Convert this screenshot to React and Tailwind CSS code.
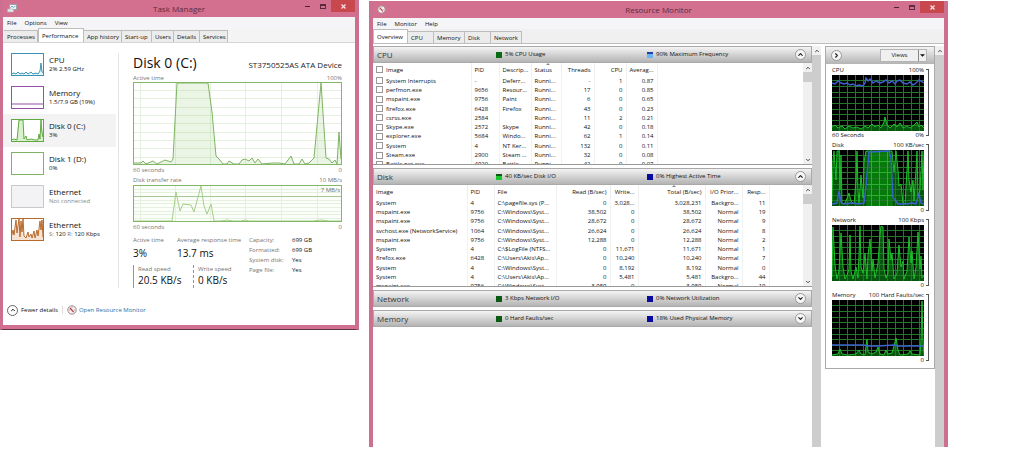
import React from 'react';
import clsx from 'clsx';
import { ChevronUp, ChevronDown, ChevronRight } from 'lucide-react';

// ---------------------------------------------------------------------------
// Data
// ---------------------------------------------------------------------------
const DEVICES = [
  { id: 'cpu', name: 'CPU', info: '2% 2.59 GHz', stroke: '#3a93b5', fill: '#e8f4f9', line: '0,21 3,20 5,21 7,19 9,21 11,20 13,21 15,19 17,21 20,19 22,21 25,20 27,21 29,18 30,10 31,19 33,20' },
  { id: 'mem', name: 'Memory', info: '1.5/7.9 GB (19%)', stroke: '#9450a8', fill: 'none', line: '0,18 33,18' },
  { id: 'd0', name: 'Disk 0 (C:)', info: '3%', stroke: '#62a844', fill: '#d9f2cd', line: '0,21 3,20 6,21 8,1 12,1 13,20 15,17 16,21 20,20 24,21 27,21 28,15 29,20 30,1 31,14 32,18 33,1', active: true },
  { id: 'd1', name: 'Disk 1 (D:)', info: '0%', stroke: '#7fb562', fill: 'none', line: '' },
  { id: 'e0', name: 'Ethernet', info: 'Not connected', stroke: '#c9c9cd', fill: 'none', line: '', off: true },
  { id: 'e1', name: 'Ethernet', info: '', stroke: '#b86a2c', fill: '#f6e3d3', line: '0,20 2,12 3,17 5,2 6,15 8,1 9,19 10,3 11,14 12,1 13,18 15,20 17,14 18,19 20,16 21,20 23,13 24,20 26,12 27,18 29,3 30,12 31,2 32,19 33,16' },
];

const CPU_ROWS = [
  ['System Interrupts', '-', 'Deferr...', '-', '1', '0.87'],
  ['perfmon.exe', '9656', 'Resour...', '17', '0', '0.85'],
  ['mspaint.exe', '9756', 'Paint', '6', '0', '0.65'],
  ['firefox.exe', '6428', 'Firefox', '43', '0', '0.23'],
  ['csrss.exe', '2584', '', '11', '2', '0.21'],
  ['Skype.exe', '2572', 'Skype', '42', '0', '0.18'],
  ['explorer.exe', '5684', 'Windo...', '62', '1', '0.14'],
  ['System', '4', 'NT Ker...', '132', '0', '0.11'],
  ['Steam.exe', '2900', 'Steam ...', '32', '0', '0.08'],
  ['Battle.net.exe', '4920', 'Battle...', '42', '0', '0.07'],
];

const DISK_ROWS = [
  ['System', '4', 'C:\\pagefile.sys (P...', '0', '3,028...', '3,028,231', 'Backgro...', '11'],
  ['mspaint.exe', '9756', 'C:\\Windows\\Syst...', '38,502', '0', '38,502', 'Normal', '19'],
  ['mspaint.exe', '9756', 'C:\\Windows\\Syst...', '28,672', '0', '28,672', 'Normal', '9'],
  ['svchost.exe (NetworkService)', '1064', 'C:\\Windows\\Syst...', '26,624', '0', '26,624', 'Normal', '8'],
  ['mspaint.exe', '9756', 'C:\\Windows\\Syst...', '12,288', '0', '12,288', 'Normal', '2'],
  ['System', '4', 'C:\\$LogFile (NTFS...', '0', '11,671', '11,671', 'Normal', '1'],
  ['firefox.exe', '6428', 'C:\\Users\\Akis\\Ap...', '0', '10,240', '10,240', 'Normal', '7'],
  ['System', '4', 'C:\\Windows\\Syst...', '0', '8,192', '8,192', 'Normal', '0'],
  ['System', '4', 'C:\\Users\\Akis\\Ap...', '0', '5,481', '5,481', 'Backgro...', '44'],
  ['mspaint.exe', '9756', 'C:\\Windows\\Syst...', '3,959', '0', '3,959', 'Normal', '19'],
];

const GRAPHS = [
  {
    name: 'CPU', max: '100%', left: '60 Seconds', min: '0%',
    green: '0,52 3,50 6,53 10,51 13,54 17,51 21,53 25,52 29,54 33,51 36,53 40,49 43,52 46,50 49,53 52,47 53,42 55,50 58,53 62,49 65,52 68,48 71,53 75,51 78,53 82,50 85,47 87,52 89,50 92,53',
    blue: '0,8 3,9 6,6 9,8 12,9 15,8 18,10 21,9 24,11 27,10 31,11 33,8 34,3 36,6 38,4 41,8 44,6 48,8 51,7 54,5 57,8 60,6 63,9 65,6 68,5 71,8 75,9 78,7 81,10 84,8 87,5 92,8',
  },
  {
    name: 'Disk', max: '100 KB/sec', left: '', min: '0',
    green: '0,52 1,10 2,1 4,30 5,1 7,1 8,40 9,5 10,54 13,53 16,46 17,43 19,51 22,54 24,30 25,1 26,40 27,53 29,25 31,48 32,12 34,1 60,1 62,22 64,1 66,20 67,36 69,34 71,53 73,54 75,20 76,1 77,30 79,42 81,30 82,51 84,20 85,1 86,46 88,40 90,1 91,40 92,1',
    blue: '0,54 5,53 7,41 9,52 12,54 20,53 27,54 32,53 34,36 37,2 57,1 59,8 61,48 63,50 66,54 74,54 80,53 84,54 87,44 89,53 92,54',
    block: '34,56 38,1 58,1 61,56',
  },
  {
    name: 'Network', max: '100 Kbps', left: '', min: '0',
    green: '0,52 1,2 3,40 5,54 7,45 9,8 11,42 13,54 15,50 17,44 18,10 19,46 21,54 24,42 26,53 27,30 28,1 29,42 31,48 33,28 35,54 36,30 38,14 40,46 41,34 43,53 46,38 48,10 49,1 51,2 52,44 54,53 56,48 57,14 59,35 60,28 62,54 65,48 67,20 69,42 71,36 72,54 75,46 77,12 79,38 80,26 82,54 84,42 86,7 88,44 89,31 90,53 92,50',
    blue: '',
  },
  {
    name: 'Memory', max: '100 Hard Faults/sec', left: '', min: '0',
    green: '0,55 6,54 8,49 10,54 16,55 24,54 27,50 29,54 33,55 34,46 35,39 36,52 40,54 44,52 46,47 48,54 52,55 54,50 56,54 60,53 62,46 64,38 66,50 68,55 76,54 78,51 80,54 88,55 89,40 90,1 91,40 92,55',
    blue: '0,45 32,45 36,46 46,46 62,45 66,46 92,46',
  },
];

// ---------------------------------------------------------------------------
// Small parts
// ---------------------------------------------------------------------------
function TitleBar({ title, icon }) {
  return (
    <header className="flex h-[17px] items-start">
      <div className="w-[58px] pt-1 pl-1">{icon}</div>
      <h1 className="flex-1 pt-[3px] text-center text-[8px] leading-[11px] text-[#5c2b3d]">{title}</h1>
      <div className="flex w-[58px] items-start justify-end">
        <button aria-label="Minimize" className="flex h-3 w-4 items-center justify-center">
          <span className="h-px w-[5px] bg-[#4a2230]" />
        </button>
        <button aria-label="Maximize" className="flex h-3 w-4 items-center justify-center">
          <span className="h-[5px] w-[6px] border border-t-2 border-[#5c2b3d]" />
        </button>
        <button aria-label="Close" className="flex h-3 w-6 items-center justify-center bg-[#c9484e]">
          <svg viewBox="0 0 5 5" className="size-[5px]" stroke="#f7e3e4" strokeWidth="1.2">
            <path d="M.5.5l4 4M4.5.5l-4 4" />
          </svg>
        </button>
      </div>
    </header>
  );
}

function MenuBar({ items }) {
  return (
    <nav className="flex h-[11px] items-center gap-2 bg-[#f5f5f8] pl-1">
      {items.map(item => (
        <button key={item} className="text-[6px] leading-[8px] text-[#111]">{item}</button>
      ))}
    </nav>
  );
}

function Tab({ label, width, selected }) {
  return (
    <button
      role="tab"
      aria-selected={!!selected}
      className={clsx(
        'border-r border-[#bdbdbd] pl-[3px] text-left text-[6px] leading-[10px] whitespace-nowrap text-[#111]',
        width,
        selected ? 'h-[14px] border-t border-l bg-white' : 'h-3 border-t bg-[#ececec]',
      )}
    >
      {label}
    </button>
  );
}

function GaugeIcon({ className }) {
  return (
    <svg viewBox="0 0 10 10" className={className} fill="none">
      <circle cx="5" cy="5" r="4.2" fill="#f4eeee" stroke="#a08a8e" />
      <path d="M3 3l3.6 4" stroke="#b3404a" strokeWidth="1.2" />
      <path d="M5 1.8v1M8 5h-1M2 5h1" stroke="#777" strokeWidth=".6" />
    </svg>
  );
}

function RoundButton({ icon: Glyph, label }) {
  return (
    <button aria-label={label} className="flex size-[11px] shrink-0 items-center justify-center rounded-full border border-[#999] bg-[#f6f6f6]">
      <Glyph size={7} strokeWidth={4} color="#222" />
    </button>
  );
}

function Scrollbar({ thumb, both }) {
  return (
    <div className="flex w-[9px] shrink-0 flex-col items-center bg-[#f0f0f0]">
      <button aria-label="Scroll up" className="flex h-[9px] w-full items-center justify-center">
        <ChevronUp size={6} strokeWidth={4} color="#444" />
      </button>
      <div className={clsx('w-full bg-[#cdcdcd]', thumb)} />
      {both && (
        <button aria-label="Scroll down" className="mt-auto flex h-[9px] w-full items-center justify-center">
          <ChevronDown size={6} strokeWidth={4} color="#444" />
        </button>
      )}
    </div>
  );
}

// ---------------------------------------------------------------------------
// Task Manager
// ---------------------------------------------------------------------------
function DeviceItem({ device }) {
  const { name, info, stroke, fill, line, active, off, id } = device;
  return (
    <button className={clsx('flex h-[33px] w-full items-center gap-[5px] pl-2 text-left', active && 'bg-[#f3f3f3]')}>
      <svg viewBox="0 0 33 23" preserveAspectRatio="none" className="h-[23px] w-[33px] shrink-0">
        <rect x=".5" y=".5" width="32" height="22" fill={off ? '#f3f3f5' : '#fff'} />
        {line && <polygon points={`0,22 ${line} 33,22`} fill={fill} />}
        {line && <polyline points={line} fill="none" stroke={stroke} />}
        <rect x=".5" y=".5" width="32" height="22" fill="none" stroke={stroke} />
      </svg>
      <span className="flex flex-col whitespace-nowrap">
        <span className="text-[8px] leading-[10px] text-[#111]">{name}</span>
        <span className={clsx('text-[6px] leading-[9px]', off ? 'text-[#888]' : 'text-[#111]')}>
          {id === 'e1' ? (
            <><span className="text-[#777]">S:</span> 120 <span className="text-[#777]">R:</span> 120 Kbps</>
          ) : info}
        </span>
      </span>
    </button>
  );
}

function GridLines({ xs, ys, w, h, color }) {
  return (
    <g stroke={color} strokeWidth="1">
      {xs.map(x => <path key={`x${x}`} d={`M${x}.5 0V${h}`} />)}
      {ys.map(y => <path key={`y${y}`} d={`M0 ${y}.5H${w}`} />)}
    </g>
  );
}

function ChartLabels({ left, right, className }) {
  return (
    <div className={clsx('flex items-center justify-between text-[6px] text-[#757575]', className)}>
      <span>{left}</span>
      <span>{right}</span>
    </div>
  );
}

function DiskPage() {
  const active = '0,81 8,81 10,79 13,82 20,79 24,82 32,78 38,80 40,77 44,1 75,1 79,30 83,74 86,77 90,82 94,82 96,79 101,82 106,82 109,78 112,77 116,79 119,76 122,81 125,77 129,82 140,81 146,81 152,82 158,74 161,82 166,82 169,77 172,82 176,81 181,76 188,1 193,76 196,77 199,81 202,78 204,82 206,50 208,77';
  const transfer = '0,36 39,36 43,7 47,26 50,19 58,20 61,27 68,1 71,21 74,29 78,19 81,36 88,36 94,35 100,36 108,36 112,35 116,36 180,36 188,35 196,36 208,36';
  return (
    <section className="flex-1 pt-[9px] pr-[13px] pl-[14px]">
      <div className="flex h-[22px] items-center justify-between">
        <h2 className="text-[14px] leading-5 text-[#111]">Disk 0 (C:)</h2>
        <span className="pt-1 text-[8px] leading-3 text-[#222]">ST3750525AS ATA Device</span>
      </div>
      <ChartLabels className="h-2" left="Active time" right="100%" />
      <svg viewBox="0 0 209 83" preserveAspectRatio="none" className="block h-[83px] w-full bg-white">
        <GridLines xs={[7, 42, 77, 112, 148, 184]} ys={[8, 16, 25, 33, 41, 50, 58, 66, 75]} w={209} h={83} color="#e6f0df" />
        <polygon points={`0,83 ${active} 209,83`} fill="#7cc35b" fillOpacity=".16" />
        <polyline points={active} fill="none" stroke="#7fb562" />
        <rect x=".5" y=".5" width="208" height="82" fill="none" stroke="#83b667" />
      </svg>
      <ChartLabels className="h-[11px]" left="60 seconds" right="0" />
      <ChartLabels className="h-[9px]" left="Disk transfer rate" right="10 MB/s" />
      <div className="relative">
        <svg viewBox="0 0 209 37" preserveAspectRatio="none" className="block h-[37px] w-full bg-[#fbfef9]">
          <GridLines xs={[7, 42, 77, 112, 148, 184]} ys={[4, 7, 15, 18, 22, 26, 29, 33]} w={209} h={37} color="#e6f0df" />
          <path d="M0 11.5H209" stroke="#a5c795" />
          <polyline points={transfer} fill="none" stroke="#a3d087" />
          <rect x=".5" y=".5" width="208" height="36" fill="none" stroke="#83b667" />
        </svg>
        <span className="absolute top-px right-[2px] text-[6px] leading-[9px] text-[#757575]">7 MB/s</span>
      </div>
      <ChartLabels className="h-[11px]" left="60 seconds" right="0" />

      {/* Counters */}
      <div className="flex pt-[3px] text-[6px] leading-[9px] whitespace-nowrap text-[#757575]">
        <div className="w-[116px]">
          <div className="flex">
            <div className="w-11">
              <div>Active time</div>
              <div className="text-[10px] leading-4 text-[#111]">3%</div>
            </div>
            <div>
              <div>Average response time</div>
              <div className="text-[10px] leading-4 text-[#111]">13.7 ms</div>
            </div>
          </div>
          <div className="flex pt-1">
            <div className="mr-[10px] w-[50px] border-l border-[#6db74b] pl-1">
              <div className="leading-2">Read speed</div>
              <div className="text-[10px] leading-[15px] text-[#111]">20.5 KB/s</div>
            </div>
            <div className="border-l border-dashed border-[#6db74b] pl-1">
              <div className="leading-2">Write speed</div>
              <div className="text-[10px] leading-[15px] text-[#111]">0 KB/s</div>
            </div>
          </div>
        </div>
        <dl className="grid grid-cols-[43px_auto] content-start gap-y-px">
          <dt>Capacity:</dt><dd className="text-[#111]">699 GB</dd>
          <dt>Formatted:</dt><dd className="text-[#111]">699 GB</dd>
          <dt>System disk:</dt><dd className="text-[#111]">Yes</dd>
          <dt>Page file:</dt><dd className="text-[#111]">Yes</dd>
        </dl>
      </div>
    </section>
  );
}

function TaskManager() {
  return (
    <section className="self-start border-r-4 border-b border-l-3 border-[#cd7090] border-b-[#5b3542] bg-[#d4708f] pb-1">
      <TitleBar
        title="Task Manager"
        icon={
          <svg viewBox="0 0 10 9" className="h-[9px] w-[10px]" fill="none">
            <rect x="2.5" y=".5" width="7" height="5" fill="#eef3f5" stroke="#9aa5ab" />
            <path d="M3.5 4l1.5-2 1.5 1.5L8.5 2" stroke="#5b9bb0" strokeWidth=".8" />
            <rect x=".5" y="5" width="6" height="3" fill="#e3e8ea" stroke="#a9b1b5" strokeWidth=".6" />
          </svg>
        }
      />
      <MenuBar items={['File', 'Options', 'View']} />
      <div role="tablist" className="flex items-end border-b border-[#d5d5d5] bg-[#f4f4f4] pl-px">
        <Tab label="Processes" width="w-[34px]" />
        <Tab label="Performance" width="w-[46px]" selected />
        <Tab label="App history" width="w-[38px]" />
        <Tab label="Start-up" width="w-[30px]" />
        <Tab label="Users" width="w-[22px]" />
        <Tab label="Details" width="w-[26px]" />
        <Tab label="Services" width="w-[28px]" />
      </div>
      <div className="bg-white">
        <div className="flex">
          <div className="w-[113px] pt-[5px]">
            {DEVICES.map(d => <DeviceItem key={d.id} device={d} />)}
          </div>
          <div className="mt-[10px] ml-[2px] w-px bg-[#e4e4e4]" />
          <DiskPage />
        </div>
        <footer className="flex h-[37px] items-center pt-[7px] pl-1 text-[6px]">
          <button className="flex items-center gap-[3px] text-[#111]">
            <span className="flex size-[11px] items-center justify-center rounded-full border border-[#666]">
              <ChevronUp size={6} strokeWidth={4} />
            </span>
            Fewer details
          </button>
          <span className="mx-1 h-2 w-px bg-[#ddd]" />
          <a href="#resmon" className="flex items-center gap-[2px] text-[#2c6fa6]">
            <GaugeIcon className="size-[10px]" />
            Open Resource Monitor
          </a>
        </footer>
      </div>
    </section>
  );
}

// ---------------------------------------------------------------------------
// Resource Monitor
// ---------------------------------------------------------------------------
function Led({ color, label }) {
  return (
    <span className="flex items-center gap-[3px]">
      <span className={clsx('size-[6px] shrink-0', color)} />
      <span className="text-[6px] text-[#111]">{label}</span>
    </span>
  );
}

function SectionBar({ title, usage, usageColor, second, secondColor, open }) {
  return (
    <div className="flex h-[17px] items-center border border-[#a9a9a9] bg-linear-to-b from-[#f4f4f4] to-[#b4b4b4] pr-[5px] pl-[3px] whitespace-nowrap">
      <h2 className="w-[119px] text-[8px] text-[#333]">{title}</h2>
      <div className="w-[151px]"><Led color={usageColor} label={usage} /></div>
      <div className="flex-1"><Led color={secondColor} label={second} /></div>
      <RoundButton icon={open ? ChevronUp : ChevronDown} label={`Toggle ${title}`} />
    </div>
  );
}

function SortMark() {
  return (
    <svg viewBox="0 0 4 2" className="absolute top-0 left-1/2 h-[2px] w-1" fill="#888">
      <path d="M0 2L2 0l2 2z" />
    </svg>
  );
}

// aligns holds one class per column, shared by header and body cells
function DataTable({ widths, heads, aligns, rows, sorted, boxes }) {
  return (
    <div className="flex h-[102px] overflow-hidden border-b border-[#999] bg-white">
      <div className="flex-1">
        <table className="h-[106px] w-full table-fixed border-collapse text-[6px] leading-[8px] whitespace-nowrap text-[#111]">
          <colgroup>
            {widths.map((w, i) => <col key={i} className={w} />)}
            <col />
          </colgroup>
          <thead>
            <tr className="h-[13px]">
              {heads.map((h, i) => (
                <th key={h} className={clsx('relative border-r border-[#eee] px-[3px] py-0 font-normal', aligns[i])}>
                  {boxes && i === 0 ? (
                    <label className="flex items-center gap-[3px]">
                      <input type="checkbox" className="size-[7px] appearance-none border border-[#999] bg-white" />
                      {h}
                    </label>
                  ) : h}
                  {sorted === i && <SortMark />}
                </th>
              ))}
              <th />
            </tr>
          </thead>
          <tbody>
            {rows.map((row, r) => (
              <tr key={r}>
                {row.map((cell, i) => (
                  <td key={i} className={clsx('border-r border-[#f2f2f2] px-[3px] py-0', aligns[i])}>
                    {boxes && i === 0 ? (
                      <label className="flex items-center gap-[3px]">
                        <input type="checkbox" className="size-[7px] appearance-none border border-[#999] bg-white" />
                        {cell}
                      </label>
                    ) : cell}
                  </td>
                ))}
                <td />
              </tr>
            ))}
          </tbody>
        </table>
      </div>
      <Scrollbar thumb="h-[10px]" both />
    </div>
  );
}

function ResourceGraph({ graph }) {
  return (
    <div className="flex">
      <div className="flex-1">
        <div className="flex h-[10px] items-center justify-between text-[6px] whitespace-nowrap text-[#111]">
          <span>{graph.name}</span>
          <span>{graph.max}</span>
        </div>
        <svg viewBox="0 0 92 56" preserveAspectRatio="none" className="block h-14 w-full bg-black">
          <polygon points={`0,56 ${graph.green} 92,56`} fill="#0a7a12" fillOpacity=".7" />
          {graph.block && <polygon points={graph.block} fill="#067a0a" />}
          <GridLines xs={[7, 15, 23, 31, 39, 47, 55, 63, 71, 79, 87]} ys={[5, 11, 17, 22, 28, 34, 39, 45, 50]} w={92} h={56} color="#23762a" />
          {graph.block && (
            <path d="M39.5 2V56M47.5 2V56M55.5 2V56M36 11.5H59M36 22.5H60M35 34.5H60M35 45.5H61" stroke="#2fae36" />
          )}
          <polyline points={graph.green} fill="none" stroke="#1fbf2c" />
          <polyline points={graph.blue} fill="none" stroke="#3c62cf" strokeWidth="1.4" />
        </svg>
        <div className="flex h-[9px] items-center justify-between text-[6px] text-[#111]">
          <span>{graph.left}</span>
          <span>{graph.min}</span>
        </div>
      </div>
      <div className="my-1 ml-[2px] w-[3px] border-y border-r border-[#555]" />
    </div>
  );
}

function ResourceMonitor() {
  return (
    <section className="mt-px flex flex-col border-x-4 border-[#cd7090] bg-[#d4708f]">
      <TitleBar title="Resource Monitor" icon={<GaugeIcon className="size-[9px]" />} />
      <MenuBar items={['File', 'Monitor', 'Help']} />
      <div role="tablist" className="flex items-end border-b border-[#bdbdbd] bg-[#f0f0f0]">
        <Tab label="Overview" width="w-[35px]" selected />
        <Tab label="CPU" width="w-[26px]" />
        <Tab label="Memory" width="w-[31px]" />
        <Tab label="Disk" width="w-[26px]" />
        <Tab label="Network" width="w-[31px]" />
      </div>
      <div className="flex flex-1 bg-white pt-[2px]">
        <main className="flex flex-1 flex-col gap-[3px]">
          <div>
            <SectionBar title="CPU" usage="5% CPU Usage" usageColor="bg-[#0b6b14]" second="90% Maximum Frequency" secondColor="border-t-2 border-[#1c3fb0] bg-[#6cb4f0]" open />
            <DataTable
              boxes
              sorted={3}
              widths={['w-[98px]', 'w-[28px]', 'w-[32px]', 'w-[30px]', 'w-[33px]', 'w-[32px]', 'w-[31px]']}
              heads={['Image', 'PID', 'Descrip...', 'Status', 'Threads', 'CPU', 'Averag...']}
              aligns={['text-left', 'text-left', 'text-left', 'text-left', 'text-right', 'text-right', 'text-right']}
              rows={CPU_ROWS.map(([name, pid, desc, ...rest]) => [name, pid, desc, 'Runni...', ...rest])}
            />
          </div>
          <div>
            <SectionBar title="Disk" usage="40 KB/sec Disk I/O" usageColor="border-t-2 border-[#0b5a14] bg-[#19c52c]" second="0% Highest Active Time" secondColor="bg-[#0a0aa0]" open />
            <DataTable
              sorted={5}
              widths={['w-[94px]', 'w-[27px]', 'w-[62px]', 'w-[54px]', 'w-[28px]', 'w-[67px]', 'w-[37px]', 'w-[27px]']}
              heads={['Image', 'PID', 'File', 'Read (B/sec)', 'Write...', 'Total (B/sec)', 'I/O Prior...', 'Resp...']}
              aligns={['text-left', 'text-left', 'text-left', 'text-right', 'text-right', 'text-right', 'text-right', 'text-right']}
              rows={DISK_ROWS}
            />
          </div>
          <SectionBar title="Network" usage="3 Kbps Network I/O" usageColor="bg-[#0b5a14]" second="0% Network Utilization" secondColor="bg-[#0a0aa0]" />
          <SectionBar title="Memory" usage="0 Hard Faults/sec" usageColor="bg-[#0b5a14]" second="18% Used Physical Memory" secondColor="bg-[#0a0aa0]" />
        </main>
        <Scrollbar thumb="flex-1" />
        <aside className="ml-1 w-[110px]">
          <div className="border border-[#aaa]">
            <div className="flex h-[17px] items-center justify-between bg-linear-to-b from-[#f4f4f4] to-[#b4b4b4] pr-[7px] pl-[5px]">
              <RoundButton icon={ChevronRight} label="Hide graphs" />
              <div className="flex h-[13px] border border-[#b5b5b5] bg-[#f0f0f0] text-[6px] text-[#111]">
                <button className="w-[37px] text-center">Views</button>
                <button aria-label="View options" className="flex w-2 items-center justify-center border-l border-[#888]">
                  <svg viewBox="0 0 4 2" className="h-[3px] w-[5px]" fill="#111"><path d="M0 0h4L2 2z" /></svg>
                </button>
              </div>
            </div>
            <div className="pt-px pr-[5px] pb-[3px] pl-[6px]">
              {GRAPHS.map(g => <ResourceGraph key={g.name} graph={g} />)}
            </div>
          </div>
        </aside>
        <Scrollbar thumb="flex-1" />
      </div>
    </section>
  );
}

export default function App() {
  return (
    <div className="grid h-screen grid-cols-[359fr_579fr] gap-[10px] bg-white pr-[76px] pb-[13px] font-['Open_Sans','Noto_Sans',sans-serif]">
      <TaskManager />
      <ResourceMonitor />
    </div>
  );
}
